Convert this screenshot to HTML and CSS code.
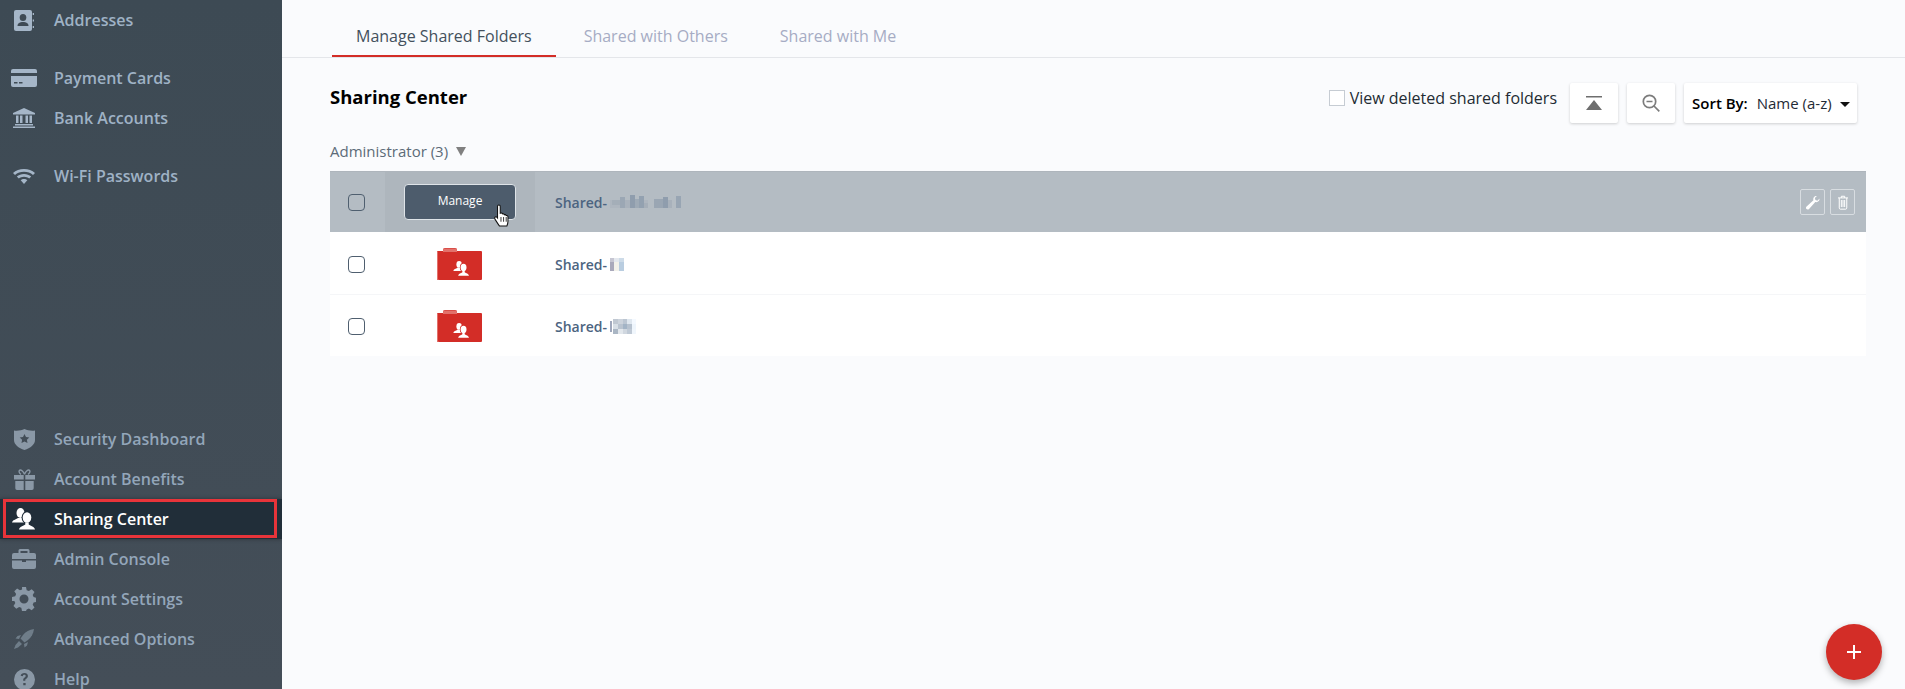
FILE: index.html
```html
<!DOCTYPE html>
<html lang="en">
<head>
<meta charset="utf-8">
<title>Sharing Center</title>
<link rel="stylesheet" href="styles.css">
</head>
<body>
<svg class="defs" width="0" height="0">
  <symbol id="people" viewBox="0 0 24 22">
    <ellipse cx="8.500" cy="5" rx="4" ry="5"/>
    <path d="M0 14.500c.5-2.500 3.800-3 6-4.500h5c2 1 3 1.500 4 2.500l-3 2H0z"/>
    <ellipse class="front" cx="15" cy="9.500" rx="5.400" ry="6.400"/>
    <path class="front" d="M5.500 22.500c.5-3.500 5-4.500 6.800-6v-2h5.400v2c1.800 1.500 6.300 2.500 6.800 6z"/>
    <ellipse cx="15" cy="9.500" rx="4.300" ry="5.300"/>
    <path d="M7 21.500c.5-2.800 4.300-3.500 6.300-5v-2h3.400v2c2 1.500 5.800 2.200 6.300 5z"/>
  </symbol>
  <symbol id="folder" viewBox="0 0 46 32">
    <path d="M1 3h5V2a2 2 0 0 1 2-2h10a2 2 0 0 1 2 2v1h24a1 1 0 0 1 1 1v27a1 1 0 0 1-1 1H2a2 2 0 0 1-2-2V4a1 1 0 0 1 1-1z" fill="#d32d27"/>
    <path d="M7 .5h12a1 1 0 0 1 1 1V4H6V1.500a1 1 0 0 1 1-1z" fill="#e2716b"/>
    <path d="M0 4h1v28H0z" fill="#e2716b"/>
  </symbol>
</svg>
<div class="app">
  <nav class="sidebar">
    <div class="nav-group">
      <a class="nav-item"><span class="nav-slot"><svg class="nav-icon" width="20" height="21" viewBox="0 0 20 21"><path d="M2 0h14a2 2 0 0 1 2 2v17a2 2 0 0 1-2 2H2a2 2 0 0 1-2-2V2a2 2 0 0 1 2-2z"/><ellipse class="cut" cx="9" cy="7.500" rx="3.300" ry="3.500"/><path class="cut" d="M3.500 16c0-3 2.500-4 5.500-4s5.500 1 5.500 4z"/><path d="M18.700 3H20v2h-1.300zM18.700 9.500H20v2h-1.300zM18.700 16H20v2h-1.300z"/></svg></span><span>Addresses</span></a>
    </div>
    <div class="nav-group nav-gap">
      <a class="nav-item"><span class="nav-slot"><svg class="nav-icon" width="26" height="18" viewBox="0 0 26 18"><path d="M2 0h22a2 2 0 0 1 2 2v2H0V2a2 2 0 0 1 2-2z"/><path d="M0 7h26v9a2 2 0 0 1-2 2H2a2 2 0 0 1-2-2z"/><path class="cut" d="M3 13h3.500v1.500H3zM8 13h3.500v1.500H8z"/></svg></span><span>Payment Cards</span></a>
      <a class="nav-item"><span class="nav-slot"><svg class="nav-icon" width="22" height="20" viewBox="0 0 22 20"><path d="M11 0 0 5v1.500h22V5z"/><path d="M3 7.500h2.500V15H3zM7 7.500h2.500V15H7zM12.500 7.500H15V15h-2.500zM16.500 7.500H19V15h-2.500z"/><path d="M2 16h18v1.500H2zM0 18.500h22V20H0z"/></svg></span><span>Bank Accounts</span></a>
    </div>
    <div class="nav-group nav-gap">
      <a class="nav-item"><span class="nav-slot"><svg class="nav-icon" width="22" height="15" viewBox="0 0 22 15"><path d="M11 0c4.300 0 8.200 1.500 11 4l-2 2c-2.300-2-5.500-3.200-9-3.200S4.300 4 2 6L0 4c2.800-2.500 6.700-4 11-4z"/><path d="M11 5c2.800 0 5.300 1 7.200 2.600l-2 2C14.900 8.500 13 7.800 11 7.800s-3.900.7-5.200 1.800l-2-2C5.700 6 8.200 5 11 5z"/><path d="M11 10c1.300 0 2.500.5 3.300 1.200L11 15l-3.300-3.800C8.500 10.500 9.700 10 11 10z"/></svg></span><span>Wi-Fi Passwords</span></a>
    </div>
    <div class="nav-group nav-bottom">
      <a class="nav-item"><span class="nav-slot"><svg class="nav-icon" width="21" height="21" viewBox="0 0 21 21"><path d="M0 1.500C3.500 2 7.500 1.500 10.500 0c3 1.500 7 2 10.500 1.500V11c0 4.500-4.500 8-10.500 10C4.500 19 0 15.500 0 11z"/><path class="cut" d="m10.500 5 1.500 3 3.300.4-2.400 2.300.6 3.300-3-1.600-3 1.600.6-3.300-2.400-2.300L9 8z"/></svg></span><span>Security Dashboard</span></a>
      <a class="nav-item"><span class="nav-slot"><svg class="nav-icon" width="21" height="21" viewBox="0 0 21 21"><path d="M0 6h9.700v4.500H0zM11.300 6H21v4.500h-9.700zM1.300 12h8.400v9H3a1.700 1.700 0 0 1-1.700-1.700zM11.300 12h8.400v7.300A1.700 1.700 0 0 1 18 21h-6.700z"/><path class="ribbon" d="M10.500 5.300C9 2 7 .5 5.800 1.200 4.600 2 5 4.300 7 5.300M10.500 5.300C12 2 14 .5 15.200 1.200 16.400 2 16 4.300 14 5.300"/></svg></span><span>Account Benefits</span></a>
      <a class="nav-item active"><span class="nav-slot"><svg class="nav-icon people" width="24" height="22"><use href="#people"/></svg></span><span>Sharing Center</span></a>
      <a class="nav-item"><span class="nav-slot"><svg class="nav-icon" width="24" height="20" viewBox="0 0 24 20"><path fill-rule="evenodd" d="M8 0h8a1.500 1.500 0 0 1 1.500 1.500V4H22a2 2 0 0 1 2 2v4H0V6a2 2 0 0 1 2-2h4.500V1.500A1.500 1.500 0 0 1 8 0zm.500 2v2h7V2z"/><path d="M0 11.500h10V13h4v-1.500h10V18a2 2 0 0 1-2 2H2a2 2 0 0 1-2-2z"/></svg></span><span>Admin Console</span></a>
      <a class="nav-item"><span class="nav-slot"><svg class="nav-icon" width="24" height="24" viewBox="0 0 24 24"><path fill-rule="evenodd" d="M10 0h4l.7 3.200 2.200.9 2.800-1.800 2.800 2.800-1.800 2.800.9 2.200 3.200.7v4l-3.200.7-.9 2.200 1.800 2.800-2.800 2.800-2.800-1.800-2.200.9L14 24h-4l-.7-3.200-2.200-.9-2.800 1.800-2.800-2.800 1.800-2.800-.9-2.200L0 14v-4l3.200-.7.9-2.200-1.800-2.800 2.800-2.800 2.800 1.800 2.200-.9zM12 7.500a4.500 4.500 0 1 0 0 9 4.500 4.500 0 0 0 0-9z"/></svg></span><span>Account Settings</span></a>
      <a class="nav-item"><span class="nav-slot"><svg class="nav-icon rocket" width="20" height="20" viewBox="0 0 20 20"><path d="M20 0c-4.500.7-8.500 2.500-11 6L6.500 9.500l4 4L14 11c3.500-2.500 5.300-6.500 6-11z"/><path d="M7 6 3.500 7 1.500 9.500l3.500.5zM14 13l-1 3.500-2.500 2-.5-3.500zM5 12l3 3-4 3.500-4 1.500 1.500-4z"/></svg></span><span>Advanced Options</span></a>
      <a class="nav-item"><span class="nav-slot"><svg class="nav-icon" width="21" height="21" viewBox="0 0 24 24"><path fill-rule="evenodd" d="M12 0a12 12 0 1 1 0 24 12 12 0 0 1 0-24zm-.1 4.500c-2.300 0-3.900 1.100-4.300 3.300l2.500.5c.2-1 .8-1.600 1.700-1.600 1 0 1.600.5 1.600 1.300 0 .7-.4 1.100-1.200 1.700-1.100.8-1.700 1.500-1.700 3v.8h2.400v-.7c0-.8.300-1.100 1.100-1.700 1.200-.9 1.900-1.800 1.900-3.200 0-2.200-1.700-3.400-3.900-3.400zM10.600 16v2.700h2.700V16z"/></svg></span><span>Help</span></a>
    </div>
  </nav>

  <main class="main">
    <div class="tabs">
      <a class="tab tab-active">Manage Shared Folders</a>
      <a class="tab">Shared with Others</a>
      <a class="tab">Shared with Me</a>
    </div>
    <div class="content">
      <div class="head">
        <h1 class="title">Sharing Center</h1>
        <div class="tools">
          <label class="deleted"><span class="deleted-box"></span>View deleted shared folders</label>
          <button class="tool"><svg width="16" height="14" viewBox="0 0 16 14"><path d="M0 0h16v1.600H0zM8 4l8 10H0z" fill="#6e6e6e"/></svg></button>
          <button class="tool"><svg width="18" height="18" viewBox="0 0 18 18" fill="none" stroke="#7c7c7c" stroke-width="1.700"><circle cx="7.500" cy="7.500" r="6.200"/><path d="M4.500 7.500h6M12 12l5.300 5.300"/></svg></button>
          <button class="sort"><b>Sort By:</b><span>Name (a-z)</span><i class="caret"></i></button>
        </div>
      </div>
      <div class="group">Administrator (3) <span class="group-arrow"></span></div>
      <div class="table">
        <div class="row row-hover">
          <span class="check"></span>
          <div class="cell-icon"><button class="manage">Manage</button>
            <svg class="cursor" width="17" height="24" viewBox="0 0 16 23"><path d="M5.500 1c.8 0 1.300.6 1.300 1.400v6.500l.7-.2c.6-.2 1.200.1 1.400.6l.2.200c.6-.2 1.200 0 1.500.5l.2.300c.6-.3 1.300 0 1.600.6l.3.200c.7-.2 1.500.3 1.500 1.200v4.200c0 2-.4 3-1 4.500H6c-1-1.400-2.500-3.700-4.300-6.500-.5-.8-.3-1.600.3-2 .6-.4 1.300-.2 1.800.4l.4.500V2.400C4.200 1.600 4.700 1 5.500 1z" fill="#fff" stroke="#111"/><path d="M7.500 12.500v4.500M10 12.500v4.500M12.500 12.500v4.500" stroke="#111" stroke-width=".8"/></svg>
          </div>
          <div class="name">Shared-<svg class="mosaic" width="72" height="14" shape-rendering="crispEdges"><rect x="0" y="5" width="38" height="8" fill="#aeb6bf"/><rect x="44" y="5" width="18" height="8" fill="#aeb6bf"/><rect x="2" y="5" width="8" height="5" fill="#a4aeb8"/><rect x="10" y="2" width="5" height="11" fill="#9ba7b4"/><rect x="15" y="5" width="5" height="8" fill="#a9b2bc"/><rect x="20" y="0" width="5" height="13" fill="#8f9dad"/><rect x="25" y="4" width="4" height="9" fill="#9eaab6"/><rect x="29" y="1" width="5" height="12" fill="#93a1b0"/><rect x="34" y="8" width="4" height="5" fill="#a6afb9"/><rect x="44" y="4" width="9" height="9" fill="#9aa6b3"/><rect x="53" y="2" width="5" height="11" fill="#8f9dad"/><rect x="58" y="5" width="4" height="8" fill="#a8b1bb"/><rect x="66" y="1" width="5" height="12" fill="#98a5b3"/></svg></div>
          <div class="row-actions">
            <button class="act"><svg width="15" height="15" viewBox="0 0 16 16"><path d="M15.500 3.800c.3 2.500-2 4.500-4.500 3.700L4.300 14.800c-.8.800-2 .8-2.700.1-.8-.8-.7-2 .1-2.700L9 5.500C8.200 3 10.200.7 12.700 1L10.500 3.300l.6 2.100 2.100.6z" fill="#fff"/></svg></button>
            <button class="act"><svg width="12" height="15" viewBox="0 0 14 18" fill="none" stroke="#fff" stroke-width="1.200"><path d="M1 3.500h12M5 3.500V1.500h4v2M2.500 3.500v12c0 .8.500 1.500 1.200 1.500h6.600c.7 0 1.200-.7 1.200-1.500v-12M5 6v8.500M7 6v8.500M9 6v8.500"/></svg></button>
          </div>
        </div>
        <div class="row">
          <span class="check"></span>
          <div class="cell-icon"><svg class="folder" width="46" height="32"><use href="#folder"/></svg><svg class="folder-people" width="17" height="15"><use href="#people"/></svg></div>
          <div class="name">Shared-<svg class="mosaic" width="14" height="13" shape-rendering="crispEdges"><rect width="4" height="4" y="0" fill="#c6c6d2"/><rect x="4" width="5" height="4" fill="#e4e8ee"/><rect x="9" width="5" height="4" fill="#cddbe8"/><rect y="4" width="4" height="9" fill="#a9a9bb"/><rect x="4" y="4" width="5" height="9" fill="#f2f1ea"/><rect x="9" y="4" width="5" height="9" fill="#b9cde0"/></svg></div>
        </div>
        <div class="row">
          <span class="check"></span>
          <div class="cell-icon"><svg class="folder" width="46" height="32"><use href="#folder"/></svg><svg class="folder-people" width="17" height="15"><use href="#people"/></svg></div>
          <div class="name">Shared-<svg class="mosaic" width="26" height="15" shape-rendering="crispEdges"><rect x="0" y="2" width="2" height="11" fill="#a0a8bc"/><rect x="3" width="5" height="5" fill="#c0c8d2"/><rect x="8" width="5" height="5" fill="#ccd3dc"/><rect x="13" width="4" height="5" fill="#bcc6d2"/><rect x="17" width="5" height="5" fill="#dfe7ef"/><rect x="22" width="4" height="5" fill="#f4f9ff"/><rect x="3" y="5" width="5" height="5" fill="#d8dfe6"/><rect x="8" y="5" width="5" height="5" fill="#bac4d0"/><rect x="13" y="5" width="4" height="5" fill="#a3b4c6"/><rect x="17" y="5" width="5" height="5" fill="#b7c2cf"/><rect x="22" y="5" width="4" height="5" fill="#eef5fc"/><rect x="3" y="10" width="5" height="5" fill="#aab6c4"/><rect x="8" y="10" width="5" height="5" fill="#e2e7ec"/><rect x="13" y="10" width="4" height="5" fill="#d0d7df"/><rect x="17" y="10" width="5" height="5" fill="#bfc9d5"/><rect x="22" y="10" width="4" height="5" fill="#f0f6fc"/></svg></div>
        </div>
      </div>
    </div>
  </main>
</div>
<div class="highlight-box"></div>
<button class="fab"><svg width="14" height="14" viewBox="0 0 14 14"><path d="M6 0h2v6h6v2H8v6H6V8H0V6h6z" fill="#fff"/></svg></button>
</body>
</html>
```
FILE: styles.css
```css
* { box-sizing: border-box; }
html, body { margin: 0; height: 100%; overflow: hidden; }
body { font-family: "Open Sans", "Liberation Sans", sans-serif; background: #fafbfd; }
button { font-family: inherit; border: 0; padding: 0; background: none; }
.defs { position: absolute; }
.defs .front { fill: var(--gap, #212e39); }

.app { display: flex; height: 689px; }

/* Sidebar */
.sidebar { width: 282px; flex: none; background: linear-gradient(#3d4a54, #444e58); overflow: hidden; }
.nav-gap { margin-top: 18px; }
.nav-bottom { margin-top: 223px; }
.nav-item { display: flex; align-items: center; gap: 18px; height: 40px; padding-left: 12px; font-size: 16px; font-weight: 600; color: #9fb2c5; }
.nav-slot { display: flex; align-items: center; justify-content: center; width: 24px; flex: none; }
.nav-icon { fill: #a5b6c8; flex: none; }
.cut { fill: #3f4b55; }
.ribbon { fill: none; stroke: #8a98a6; stroke-width: 1.400; }
.nav-bottom .nav-item { color: #93a6ba; }
.nav-bottom .nav-icon { fill: #8a98a6; }
.nav-bottom .cut { fill: #424d57; }
.nav-bottom .rocket { fill: #6f7d89; }
.nav-bottom .nav-item.active { background: #212e39; color: #fff; box-shadow: 0 0 4px rgba(0,0,0,.35); }
.nav-bottom .nav-item.active .nav-icon { fill: #fff; }
.people { --gap: #212e39; }
.highlight-box { position: absolute; left: 3px; top: 499px; width: 274px; height: 39px; border: 3px solid #e8343a; pointer-events: none; }

/* Main */
.main { flex: 1; min-width: 0; display: flex; flex-direction: column; }
.tabs { display: flex; gap: 4px; height: 58px; padding-left: 50px; border-bottom: 1px solid #e4e6ea; }
.tab { height: 57px; padding: 25px 24px 0; font-size: 16px; line-height: 22px; color: #a6acc4; }
.tab-active { color: #43505c; border-bottom: 2px solid #d32d27; }
.content { padding: 0 39px 0 48px; }
.head { display: flex; justify-content: space-between; align-items: flex-start; height: 81px; padding-top: 25px; padding-right: 9px; }
.title { margin: 0; font-size: 18.500px; line-height: 28px; font-weight: 700; color: #000; }
.tools { display: flex; align-items: flex-start; }
.deleted { display: flex; align-items: center; height: 30px; margin-right: 13px; font-size: 16px; color: #232b33; }
.deleted-box { width: 16px; height: 16px; margin-right: 5px; border: 1px solid #c6ccd3; background: #fff; }
.tool { display: flex; align-items: center; justify-content: center; width: 48px; height: 40px; margin-right: 9px; background: #fff; border-radius: 2px; box-shadow: 0 1px 3px rgba(0,0,0,.18); }
.sort { display: flex; align-items: center; width: 173px; height: 40px; padding-left: 8px; background: #fff; border-radius: 2px; box-shadow: 0 1px 3px rgba(0,0,0,.18); font-size: 15px; color: #1f2b36; }
.sort b { font-size: 15px; font-weight: 600; color: #000; margin-right: 9px; }
.caret { width: 0; height: 0; margin-top: 2px; margin-left: 8px; border-left: 5px solid transparent; border-right: 5px solid transparent; border-top: 5px solid #111; }

.group { display: flex; align-items: center; gap: 8px; height: 24px; font-size: 15px; line-height: 24px; color: #5c6b78; }
.group-arrow { width: 0; height: 0; margin-top: 1px; border-left: 5px solid transparent; border-right: 5px solid transparent; border-top: 9px solid #808080; }

.table { margin-top: 8px; background: #fff; }
.row { position: relative; display: flex; align-items: center; height: 63px; padding-top: 2px; border-bottom: 1px solid #f5f6f8; }
.row:last-child { border-bottom: 0; height: 61px; padding-top: 1px; }
.row-hover { height: 61px; padding-top: 0; background: #b4bcc3; border-top: 1px solid #aeb5bc; border-bottom: 0; }
.check { width: 17px; height: 17px; margin-left: 18px; flex: none; border: 1.500px solid #4f5f6f; border-radius: 4px; }
.cell-icon { position: relative; display: flex; align-items: center; justify-content: center; flex: none; width: 150px; height: 100%; margin-left: 20px; }
.row-hover .cell-icon { background: #aeb6bd; }
.manage { width: 112px; height: 36px; background: #4d5c6c; border: 1px solid #dfe4e8; border-radius: 4px; color: #fff; font-size: 12px; font-weight: 400; line-height: 30px; padding-bottom: 3px; }
.cursor { position: absolute; left: 108px; top: 32px; }
.folder-people { position: absolute; left: 68px; top: 27px; color: #fff; fill: #fff; --gap: #d32d27; }
.name { display: flex; align-items: center; margin-left: 20px; font-size: 14px; font-weight: 600; color: #4c6480; }
.mosaic { margin-left: 3px; }
.row-actions { display: flex; gap: 5px; margin-left: auto; margin-right: 11px; }
.act { display: flex; align-items: center; justify-content: center; width: 25px; height: 26px; border: 1px solid #d8dde1; border-radius: 2px; }

.fab { position: absolute; left: 1826px; top: 624px; display: flex; align-items: center; justify-content: center; width: 56px; height: 56px; border-radius: 50%; background: #d32d27; box-shadow: 0 3px 7px rgba(0,0,0,.3); }
```
